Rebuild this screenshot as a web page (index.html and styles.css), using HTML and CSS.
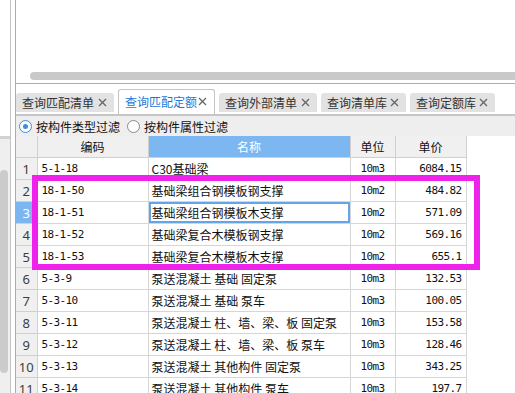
FILE: index.html
```html
<!DOCTYPE html>
<html lang="zh-CN">
<head>
    <meta charset="UTF-8">
    <title>查询匹配定额</title>
    <link rel="stylesheet" href="styles.css">
</head>
<body>
    <div class="app">
        <div class="side">
            <div class="side-top"></div>
            <div class="side-track"><div class="side-thumb"></div></div>
        </div>
        <div class="split"></div>
        <div class="content">
            <div class="top-panel"><div class="hscroll"></div></div>
            <div class="tabs">
                <div class="tab">查询匹配清单<span class="close"><svg width="9" height="9" viewBox="0 0 9 9"><path d="M1 1L8 8M8 1L1 8" stroke="#666" stroke-width="1.3"/></svg></span></div>
                <div class="tab active">查询匹配定额<span class="close"><svg width="9" height="9" viewBox="0 0 9 9"><path d="M1 1L8 8M8 1L1 8" stroke="#666" stroke-width="1.3"/></svg></span></div>
                <div class="tab">查询外部清单<span class="close"><svg width="9" height="9" viewBox="0 0 9 9"><path d="M1 1L8 8M8 1L1 8" stroke="#666" stroke-width="1.3"/></svg></span></div>
                <div class="tab short">查询清单库<span class="close"><svg width="9" height="9" viewBox="0 0 9 9"><path d="M1 1L8 8M8 1L1 8" stroke="#666" stroke-width="1.3"/></svg></span></div>
                <div class="tab short">查询定额库<span class="close"><svg width="9" height="9" viewBox="0 0 9 9"><path d="M1 1L8 8M8 1L1 8" stroke="#666" stroke-width="1.3"/></svg></span></div>
            </div>
            <div class="filter-bar">
                <label class="radio checked"><span class="dot"></span>按构件类型过滤</label>
                <label class="radio"><span class="dot"></span>按构件属性过滤</label>
            </div>
            <div class="grid-wrap">
                <table class="grid">
                    <colgroup>
                        <col style="width:21px">
                        <col style="width:111px">
                        <col style="width:202px">
                        <col style="width:45px">
                        <col style="width:71px">
                    </colgroup>
                    <thead>
                        <tr>
                            <th></th>
                            <th>编码</th>
                            <th class="sorted">名称</th>
                            <th>单位</th>
                            <th>单价</th>
                        </tr>
                    </thead>
                    <tbody>
                        <tr><td class="num">1</td><td class="code">5-1-18</td><td class="name">C30基础梁</td><td class="unit">10m3</td><td class="price">6084.15</td></tr>
                        <tr><td class="num">2</td><td class="code">18-1-50</td><td class="name">基础梁组合钢模板钢支撑</td><td class="unit">10m2</td><td class="price">484.82</td></tr>
                        <tr class="current"><td class="num">3</td><td class="code">18-1-51</td><td class="name focus">基础梁组合钢模板木支撑</td><td class="unit">10m2</td><td class="price">571.09</td></tr>
                        <tr><td class="num">4</td><td class="code">18-1-52</td><td class="name">基础梁复合木模板钢支撑</td><td class="unit">10m2</td><td class="price">569.16</td></tr>
                        <tr><td class="num">5</td><td class="code">18-1-53</td><td class="name">基础梁复合木模板木支撑</td><td class="unit">10m2</td><td class="price">655.1</td></tr>
                        <tr><td class="num">6</td><td class="code">5-3-9</td><td class="name">泵送混凝土 基础 固定泵</td><td class="unit">10m3</td><td class="price">132.53</td></tr>
                        <tr><td class="num">7</td><td class="code">5-3-10</td><td class="name">泵送混凝土 基础 泵车</td><td class="unit">10m3</td><td class="price">100.05</td></tr>
                        <tr><td class="num">8</td><td class="code">5-3-11</td><td class="name">泵送混凝土 柱、墙、梁、板 固定泵</td><td class="unit">10m3</td><td class="price">153.58</td></tr>
                        <tr><td class="num">9</td><td class="code">5-3-12</td><td class="name">泵送混凝土 柱、墙、梁、板 泵车</td><td class="unit">10m3</td><td class="price">128.46</td></tr>
                        <tr><td class="num">10</td><td class="code">5-3-13</td><td class="name">泵送混凝土 其他构件 固定泵</td><td class="unit">10m3</td><td class="price">343.25</td></tr>
                        <tr><td class="num">11</td><td class="code">5-3-14</td><td class="name">泵送混凝土 其他构件 泵车</td><td class="unit">10m3</td><td class="price">197.7</td></tr>
                    </tbody>
                </table>
                <div class="mark"></div>
            </div>
        </div>
    </div>
</body>
</html>
```

FILE: styles.css
```css
body {
    margin: 0;
    background: #fff;
    font-family: "Noto Sans CJK SC", "Noto Sans", sans-serif;
    font-size: 12px;
    color: #111;
}
.app {
    display: flex;
    width: 515px;
    height: 393px;
    overflow: hidden;
}
.side {
    width: 10px;
    display: flex;
    flex-direction: column;
}
.side-top {
    height: 136px;
    flex-shrink: 0;
}
.side-track {
    flex: 1;
    background: #efefef;
    border-top: 3px solid #d2d2d2;
    padding-top: 31px;
}
.side-thumb {
    width: 8px;
    height: 203px;
    background: #cbcbcb;
    border-radius: 4px;
}
.split {
    width: 1px;
    background: #c4c4c4;
    margin-right: 4px;
}
.content {
    flex: 1;
    border-left: 1px solid #acacac;
    display: flex;
    flex-direction: column;
}
.content > div {
    flex-shrink: 0;
}
.top-panel {
    height: 84px;
    box-sizing: border-box;
    border-bottom: 1px solid #acacac;
    padding: 72px 0 0 14px;
}
.hscroll {
    height: 8px;
    background: #c9c9c9;
    border-radius: 4px 0 0 4px;
}
.tabs {
    display: flex;
    align-items: flex-end;
    gap: 4px;
    height: 25px;
    margin-top: 5px;
}
.tab {
    display: flex;
    align-items: center;
    justify-content: space-between;
    box-sizing: border-box;
    flex: none;
    width: 98px;
    height: 19px;
    padding: 0 7px 0 6px;
    background: #e2e2e2;
    color: #333;
    border-radius: 3px 3px 0 0;
    margin-bottom: 2px;
    white-space: nowrap;
}
.tab.short {
    width: 85px;
}
.tab.active {
    width: 97px;
    background: #fff;
    color: #1f78d8;
    border: 1px solid #c4c4c4;
    border-bottom: none;
    height: 25px;
    margin-bottom: 0;
    padding-bottom: 2px;
}
.close {
    display: flex;
}
.filter-bar {
    height: 20px;
    border-top: 2px solid #c6c6c6;
    background: #eeeeee;
    display: flex;
    align-items: center;
    padding-left: 3px;
    gap: 7px;
}
.radio {
    display: flex;
    align-items: center;
    gap: 4px;
    color: #111;
}
.dot {
    width: 11px;
    height: 11px;
    border: 1px solid #8a8a8a;
    border-radius: 50%;
    background: #fff;
    position: relative;
}
.radio.checked .dot {
    border-color: #3d8ee0;
}
.radio.checked .dot::after {
    content: "";
    position: absolute;
    left: 3px;
    top: 3px;
    width: 5px;
    height: 5px;
    border-radius: 50%;
    background: #3d8ee0;
}
.grid-wrap {
    position: relative;
}
.grid {
    border-collapse: collapse;
    table-layout: fixed;
    width: 450px;
}
.grid th {
    height: 21px;
    padding: 0;
    background: #f0f0f0;
    border: 1px solid #d0d0d0;
    border-left: none;
    border-top: none;
    font-weight: normal;
    text-align: center;
}
.grid th.sorted {
    background: #7db7f1;
    color: #fff;
}
.grid tbody tr {
    height: 22px;
}
.grid td {
    padding: 0;
    border: 1px solid #d6d6d6;
    border-left: none;
    white-space: nowrap;
    overflow: hidden;
}
.grid td.num {
    background: #f0f0f0;
    text-align: center;
    font-family: "Noto Sans", sans-serif;
    font-size: 13px;
    color: #3c3c3c;
    border-color: #d0d0d0;
}
.grid tr.current td.num {
    background: #7cb6f1;
    color: #fff;
}
.grid td.code,
.grid td.unit,
.grid td.price {
    font-family: "DejaVu Sans Mono", monospace;
    font-size: 11px;
    letter-spacing: -0.6px;
}
.grid td.code {
    padding-left: 4px;
}
.grid td.name {
    padding-left: 3px;
}
.grid td.focus {
    box-shadow: inset 0 0 0 2px #63a5e8;
}
.grid td.unit {
    text-align: center;
}
.grid td.price {
    text-align: right;
    padding-right: 4px;
}
.mark {
    position: absolute;
    left: 16px;
    top: 39px;
    width: 448px;
    height: 95px;
    box-sizing: border-box;
    border: 6px solid #ee22ea;
}
```
